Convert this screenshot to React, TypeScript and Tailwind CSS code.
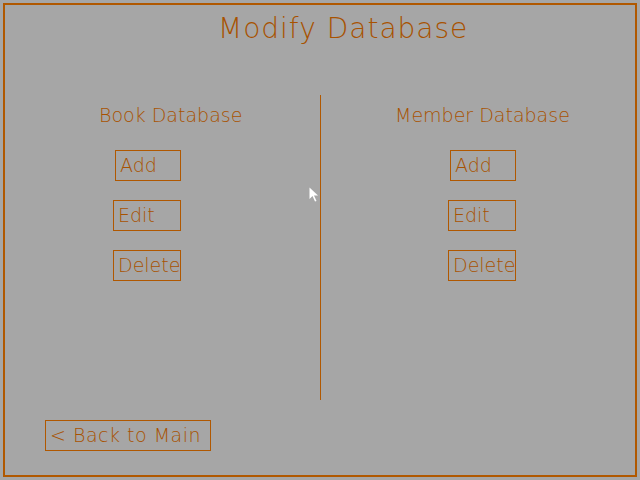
const ink = 'text-[#a85200]';

function Btn({ label, w, ml }: { label: string; w: string; ml: string }) {
  return (
    <div
      className={`${w} ${ml} h-[31px] border border-[#b05800] ${ink} text-[19px] leading-[29px] pl-[4px] font-light`}
    >
      {label}
    </div>
  );
}

export default function App() {
  return (
    <div
      className="relative w-[640px] h-[480px] bg-[#a6a6a6] p-[3px]"
      style={{ fontFamily: '"DejaVu Sans", sans-serif' }}
    >
      <div className="h-full border-2 border-[#b05800] flex flex-col">
        <h1 className={`${ink} text-[28px] leading-[32px] ml-[213px] mt-[8px] font-light tracking-[1px]`}>
          Modify Database
        </h1>
        <div className="flex mt-[50px]">
          <div className="w-[315px] flex flex-col">
            <p className={`${ink} text-[19px] leading-[24px] mt-[8px] ml-[94px] font-light`}>
              Book Database
            </p>
            <div className="flex flex-col gap-[19px] mt-[23px]">
              <Btn label="Add" w="w-[66px]" ml="ml-[110px]" />
              <Btn label="Edit" w="w-[68px]" ml="ml-[108px]" />
              <Btn label="Delete" w="w-[68px]" ml="ml-[108px]" />
            </div>
          </div>
          <div className="w-px h-[305px] bg-[#b05800]" />
          <div className="flex-1 flex flex-col">
            <p className={`${ink} text-[19px] leading-[24px] mt-[8px] ml-[74px] font-light`}>
              Member Database
            </p>
            <div className="flex flex-col gap-[19px] mt-[23px]">
              <Btn label="Add" w="w-[66px]" ml="ml-[129px]" />
              <Btn label="Edit" w="w-[68px]" ml="ml-[127px]" />
              <Btn label="Delete" w="w-[68px]" ml="ml-[127px]" />
            </div>
          </div>
        </div>
        <div className="mt-[20px] ml-[40px]">
          <div
            className={`w-[166px] h-[31px] border border-[#b05800] ${ink} text-[19px] leading-[29px] pl-[4px] font-light tracking-[0.5px]`}
          >
            &lt; Back to Main
          </div>
        </div>
      </div>
      <svg className="absolute left-[309px] top-[187px]" width="10" height="16" viewBox="0 0 10 16">
        <path d="M0.5 0.5 L0.5 12 L3.5 9 L6 14.5 L7.5 14 L5 8.5 L9 8.5 Z" fill="#fff" />
      </svg>
    </div>
  );
}
